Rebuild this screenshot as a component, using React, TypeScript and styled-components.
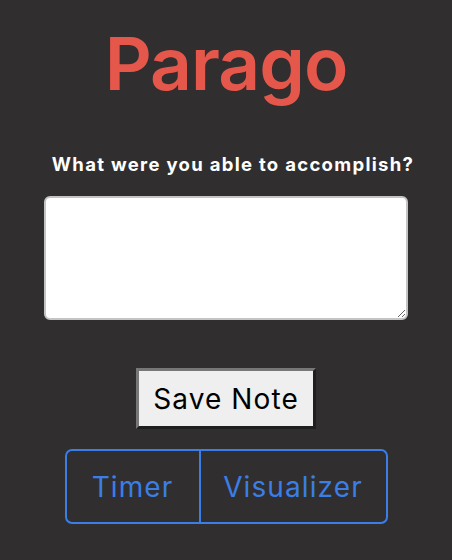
import React, { useState } from "react";
import styled, { createGlobalStyle } from "styled-components";

const GlobalStyle = createGlobalStyle`
  html, body {
    margin: 0;
    padding: 0;
    background-color: #302e2f;
  }
  body {
    font-family: Inter, "Helvetica Neue", Arial, sans-serif;
  }
`;

const Page = styled.div`
  width: 452px;
  min-height: 560px;
  display: flex;
  flex-direction: column;
  align-items: center;
`;

const Logo = styled.h1`
  margin: 19px 0 0;
  font-size: 73px;
  font-weight: 600;
  line-height: 90px;
  color: #e5574b;
  letter-spacing: -1px;
`;

const Prompt = styled.label`
  margin-top: 44px;
  margin-left: 14px;
  font-size: 18.5px;
  font-weight: 700;
  line-height: 22px;
  color: #ffffff;
  letter-spacing: 1.3px;
`;

const NoteBox = styled.textarea`
  box-sizing: border-box;
  margin-top: 21px;
  width: 364px;
  height: 124px;
  border: 2px solid #c4c4c6;
  border-radius: 6px;
  background: #ffffff;
  font-family: inherit;
  font-size: 14px;
  padding: 6px;
  outline: none;
`;

const SaveButton = styled.button`
  box-sizing: border-box;
  margin-top: 48px;
  width: 180px;
  height: 61px;
  border: 3px solid;
  border-color: #777777 #1f1f1f #1f1f1f #777777;
  background: #efefef;
  color: #000000;
  font-family: inherit;
  font-size: 28px;
  font-weight: 400;
  letter-spacing: 1.1px;
  padding: 0;
  cursor: pointer;
`;

const TabGroup = styled.div`
  box-sizing: border-box;
  margin-top: 20px;
  display: flex;
  height: 75px;
  border: 2px solid #3a7ee6;
  border-radius: 7px;
`;

const Tab = styled.button<{ $width: number; $divider?: boolean }>`
  box-sizing: border-box;
  width: ${(p) => p.$width}px;
  height: 100%;
  border: none;
  border-right: ${(p) => (p.$divider ? "2px solid #3a7ee6" : "none")};
  background: transparent;
  color: #3a7ee6;
  font-family: inherit;
  font-size: 28px;
  font-weight: 400;
  letter-spacing: 1.1px;
  padding: 0;
  cursor: pointer;
`;

export default function App() {
  const [note, setNote] = useState("");

  return (
    <Page>
      <GlobalStyle />
      <Logo>Parago</Logo>
      <Prompt htmlFor="note">What were you able to accomplish?</Prompt>
      <NoteBox
        id="note"
        value={note}
        onChange={(e) => setNote(e.target.value)}
      />
      <SaveButton>Save Note</SaveButton>
      <TabGroup>
        <Tab $width={134} $divider>
          Timer
        </Tab>
        <Tab $width={185}>Visualizer</Tab>
      </TabGroup>
    </Page>
  );
}
